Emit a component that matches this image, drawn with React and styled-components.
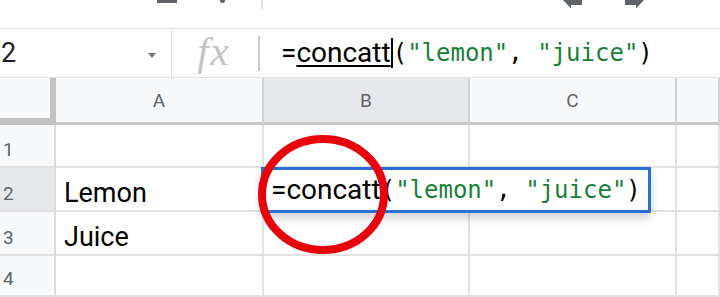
import React from "react";
import styled, { createGlobalStyle } from "styled-components";

const GlobalStyle = createGlobalStyle`
  html, body {
    margin: 0;
    padding: 0;
    background: #fff;
  }
  body {
    font-family: Roboto, "Liberation Sans", sans-serif;
  }
`;

const Screen = styled.div`
  position: relative;
  width: 720px;
  height: 297px;
  overflow: hidden;
  background: #fff;
  display: flex;
  flex-direction: column;
`;

/* top toolbar, only its lower edge is visible */
const Toolbar = styled.div`
  flex: none;
  height: 28px;
  border-bottom: 1px solid #e2e2e2;
  display: flex;
  align-items: flex-start;
  padding-left: 157px;
`;

const ToolPiece = styled.div`
  flex: none;
  margin-left: ${(p) => p.$gap || 0}px;
  width: ${(p) => p.$w}px;
  height: ${(p) => p.$h}px;
  background: ${(p) => p.$color || "#5f6368"};
  border-radius: ${(p) => (p.$round ? "0 0 3px 3px" : "0")};
`;

const ToolIcon = styled.svg`
  flex: none;
  margin-left: ${(p) => p.$gap || 0}px;
  display: block;
`;

/* formula bar */
const FormulaBar = styled.div`
  flex: none;
  height: 48px;
  border-bottom: 1px solid #e2e2e2;
  display: flex;
  align-items: stretch;
`;

const NameBox = styled.div`
  flex: none;
  width: 172px;
  box-sizing: border-box;
  border-right: 1px solid #e2e2e2;
  display: flex;
  align-items: center;
  justify-content: space-between;
  padding: 0 15px 0 1px;
  font-size: 27px;
  color: #202124;
`;

const CellRef = styled.span`
  line-height: 1;
`;

const Caret = styled.span`
  width: 0;
  height: 0;
  border-left: 4.5px solid transparent;
  border-right: 4.5px solid transparent;
  border-top: 5px solid #757575;
  margin-top: 4px;
`;

const FxBox = styled.div`
  flex: none;
  width: 86px;
  display: flex;
  align-items: center;
  justify-content: center;
  font-family: "Liberation Serif", "DejaVu Serif", serif;
  font-style: italic;
  font-size: 41px;
  line-height: 1;
  color: #c4c4c4;
  letter-spacing: 2px;
  padding: 0 2px 4px 0;
  box-sizing: border-box;
`;

const FxDivider = styled.div`
  flex: none;
  align-self: center;
  width: 2px;
  height: 35px;
  background: #c9c9c9;
`;

const FormulaInput = styled.div`
  flex: 1;
  display: flex;
  align-items: center;
  padding-left: 21px;
  white-space: nowrap;
`;

const SansPart = styled.span`
  font-family: Roboto, "Liberation Sans", sans-serif;
  font-size: 28px;
  line-height: 1;
  color: #000;
`;

const FuncName = styled.span`
  text-decoration: ${(p) => (p.$underline ? "underline" : "none")};
  text-decoration-thickness: 2px;
  text-underline-offset: 3px;
`;

const Cursor = styled.span`
  display: inline-block;
  width: 2px;
  height: 30px;
  background: #000;
  vertical-align: -6px;
`;

const MonoPart = styled.span`
  font-family: "DejaVu Sans Mono", "Liberation Mono", monospace;
  font-size: 24px;
  line-height: 1;
  color: #000;
`;

const Str = styled.span`
  color: #188038;
`;

/* sheet grid */
const Sheet = styled.div`
  flex: 1;
  display: grid;
  grid-template-columns: 56px 208px 206px 207px 1fr;
  grid-template-rows: 47px 43px 44px 44px 1fr;
`;

const Corner = styled.div`
  background: #f8f9fa;
  border-right: 6px solid #c2c2c2;
  border-bottom: 7px solid #c2c2c2;
  box-sizing: border-box;
`;

const ColHeader = styled.div`
  box-sizing: border-box;
  background: ${(p) => (p.$active ? "#e7e8eb" : "#f8f9fa")};
  border-right: 2px solid #d2d2d2;
  border-bottom: 3px solid #c6c6c6;
  display: flex;
  align-items: center;
  justify-content: center;
  font-size: 19px;
  line-height: 1;
  color: #5f6368;
`;

const RowHeader = styled.div`
  box-sizing: border-box;
  background: ${(p) => (p.$active ? "#e7e8eb" : "#f8f9fa")};
  border-right: 2px solid #dcdcdc;
  border-bottom: 2px solid #e2e2e2;
  display: flex;
  align-items: flex-end;
  padding: 0 0 7px 3px;
  font-size: 19px;
  line-height: 1;
  color: #5f6368;
`;

const Cell = styled.div`
  box-sizing: border-box;
  border-right: 2px solid #e2e2e2;
  border-bottom: 2px solid #e2e2e2;
  display: flex;
  align-items: flex-end;
  padding: 0 0 3px 8px;
  font-size: 27px;
  line-height: 1;
  color: #000;
  white-space: nowrap;
`;

/* overlays: the in-cell editor and the red annotation ring */
const CellEditor = styled.div`
  position: absolute;
  left: 261px;
  top: 167px;
  width: 390px;
  height: 46px;
  box-sizing: border-box;
  border: 3px solid #2a6fd6;
  background: #fff;
  box-shadow: 0 5px 9px rgba(0, 0, 0, 0.18);
  display: flex;
  align-items: center;
  padding-left: 7px;
  white-space: nowrap;
`;

const Ring = styled.svg`
  position: absolute;
  left: 254px;
  top: 131px;
  pointer-events: none;
`;

const columns = ["A", "B", "C", ""];
const rows = [
  { n: "1", a: "" },
  { n: "2", a: "Lemon", active: true },
  { n: "3", a: "Juice" },
  { n: "4", a: "" },
];

const Formula = ({ underline, cursor }) => (
  <>
    <SansPart>
      =<FuncName $underline={underline}>concatt</FuncName>
    </SansPart>
    {cursor && <Cursor />}
    <MonoPart>
      (<Str>"lemon"</Str>, <Str>"juice"</Str>)
    </MonoPart>
  </>
);

export default function App() {
  return (
    <Screen>
      <GlobalStyle />
      <Toolbar>
        <ToolPiece $w={20} $h={3} />
        <ToolPiece $gap={43} $w={5} $h={3} $round />
        <ToolPiece $gap={36} $w={2} $h={9} $color="#dadce0" />
        <ToolIcon $gap={300} width="19" height="9" viewBox="0 0 19 9">
          <path d="M0 0 H19 V5 H8 V8.5 Z" fill="#5f6368" />
        </ToolIcon>
        <ToolIcon $gap={43} width="19" height="9" viewBox="0 0 19 9">
          <path d="M19 0 H0 V5 H11 V8.5 Z" fill="#5f6368" />
        </ToolIcon>
      </Toolbar>

      <FormulaBar>
        <NameBox>
          <CellRef>2</CellRef>
          <Caret />
        </NameBox>
        <FxBox>fx</FxBox>
        <FxDivider />
        <FormulaInput>
          <Formula underline cursor />
        </FormulaInput>
      </FormulaBar>

      <Sheet>
        <Corner />
        {columns.map((c) => (
          <ColHeader key={c || "d"} $active={c === "B"}>
            {c}
          </ColHeader>
        ))}
        {rows.map((r) => (
          <React.Fragment key={r.n}>
            <RowHeader $active={r.active}>{r.n}</RowHeader>
            <Cell>{r.a}</Cell>
            <Cell />
            <Cell />
            <Cell />
          </React.Fragment>
        ))}
      </Sheet>

      <CellEditor>
        <Formula />
      </CellEditor>

      <Ring width="138" height="127" viewBox="0 0 138 127">
        <ellipse cx="69" cy="63.5" rx="61" ry="55.5" fill="none" stroke="#e8000b" strokeWidth="8" />
      </Ring>
    </Screen>
  );
}
